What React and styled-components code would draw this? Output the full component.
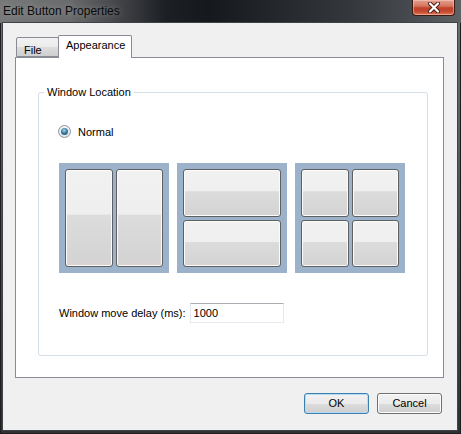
import styled, { createGlobalStyle } from "styled-components";

const GlobalStyle = createGlobalStyle`
  html, body {
    margin: 0;
    padding: 0;
    background: #ffffff;
  }
  body {
    font-family: "Liberation Sans", Arial, sans-serif;
    font-size: 11px;
    color: #000;
  }
`;

const layouts = ["cols", "rows", "grid"];

const App = () => {
  return (
    <>
      <GlobalStyle />
      <Window>
        <TitleBar>
          <Title>Edit Button Properties</Title>
          <CloseButton>
            <svg width="14" height="11" viewBox="0 0 14 11">
              <path d="M3 1.5 L11 9.5 M11 1.5 L3 9.5" stroke="#4a1a12" strokeWidth="4" strokeLinecap="round" />
              <path d="M3 1.5 L11 9.5 M11 1.5 L3 9.5" stroke="#ffffff" strokeWidth="2.2" strokeLinecap="round" />
            </svg>
          </CloseButton>
        </TitleBar>
        <Client>
          <TabStrip>
            <Tab width="43px">File</Tab>
            <Tab active width="74px">Appearance</Tab>
          </TabStrip>
          <Panel>
            <GroupBox>
              <GroupLabel>Window Location</GroupLabel>
              <RadioRow>
                <Radio>
                  <RadioDot />
                </Radio>
                <span>Normal</span>
              </RadioRow>
              <PreviewRow>
                {layouts.map((l) => (
                  <Preview key={l} layout={l}>
                    {Array.from({ length: l === "grid" ? 4 : 2 }).map((_, i) => (
                      <Pane key={i} />
                    ))}
                  </Preview>
                ))}
              </PreviewRow>
              <DelayRow>
                <span>Window move delay (ms):</span>
                <TextInput defaultValue="1000" />
              </DelayRow>
            </GroupBox>
          </Panel>
          <Footer>
            <Button primary>OK</Button>
            <Button>Cancel</Button>
          </Footer>
        </Client>
      </Window>
    </>
  );
};

const Window = styled.div`
  width: 461px;
  height: 434px;
  box-sizing: border-box;
  display: flex;
  flex-direction: column;
  padding: 0 4px 4px 3px;
  background: linear-gradient(to bottom, #6e7072 0%, #55585b 40%, #2e3134 100%);
  box-shadow: inset 0 0 0 1px #1d1f21;
`;

const TitleBar = styled.div`
  height: 23px;
  margin: 0 -4px 0 -3px;
  padding: 0 6px 0 3px;
  display: flex;
  justify-content: space-between;
  align-items: flex-start;
  background: linear-gradient(
    to right,
    #777878 0%,
    #6a6b6c 15%,
    #3a3c40 28%,
    #1c1f24 36%,
    #15181d 45%,
    #24272c 60%,
    #33363b 75%,
    #45484c 88%,
    #5f6265 100%
  );
`;

const Title = styled.div`
  align-self: center;
  margin-top: -2px;
  font-size: 12px;
  color: #0a0a0a;
  text-shadow: 0 0 6px rgba(255, 255, 255, 0.35);
`;

const CloseButton = styled.div`
  width: 43px;
  height: 16px;
  box-sizing: border-box;
  display: flex;
  align-items: center;
  justify-content: center;
  border: 1px solid #3c1a14;
  border-top: none;
  border-radius: 0 0 4px 4px;
  background: linear-gradient(
    to bottom,
    #e3a08f 0%,
    #d67761 40%,
    #c2432c 52%,
    #c4472f 75%,
    #de7a58 100%
  );
  box-shadow: inset 0 0 0 1px rgba(255, 220, 210, 0.45);
`;

const Client = styled.div`
  flex: 1;
  display: flex;
  flex-direction: column;
  padding: 13px 13px 0 12px;
  background: #f0f0f0;
  box-shadow: 0 0 0 1px #3f4246;
`;

const TabStrip = styled.div`
  display: flex;
  align-items: flex-end;
  height: 22px;
  padding-left: 1px;
  position: relative;
  z-index: 1;
  margin-bottom: -1px;
`;

const Tab = styled.div`
  box-sizing: border-box;
  width: ${({ width }) => width};
  height: ${({ active }) => (active ? "23px" : "20px")};
  padding: ${({ active }) => (active ? "3px 0 0 7px" : "6px 0 0 7px")};
  margin-left: ${({ active }) => (active ? "-1px" : "0")};
  border: 1px solid #898c95;
  border-bottom: ${({ active }) => (active ? "none" : "1px solid #898c95")};
  border-radius: 2px 2px 0 0;
  background: ${({ active }) =>
    active
      ? "#ffffff"
      : "linear-gradient(to bottom, #f2f2f2 0%, #ebebeb 50%, #dddddd 51%, #cfcfcf 100%)"};
  margin-bottom: ${({ active }) => (active ? "0" : "1px")};
`;

const Panel = styled.div`
  height: 321px;
  box-sizing: border-box;
  border: 1px solid #898c95;
  background: #ffffff;
  padding: 34px 16px 0 22px;
`;

const GroupBox = styled.div`
  position: relative;
  width: 390px;
  height: 264px;
  box-sizing: border-box;
  border: 1px solid #d5dfe5;
  border-radius: 3px;
  padding: 27px 0 0 20px;
`;

const GroupLabel = styled.span`
  position: absolute;
  top: -7px;
  left: 5px;
  padding: 0 3px;
  background: #ffffff;
  line-height: 13px;
`;

const RadioRow = styled.div`
  display: flex;
  align-items: center;
  gap: 7px;
  height: 13px;
  margin-left: -1px;
  margin-top: 5px;
`;

const Radio = styled.div`
  width: 13px;
  height: 13px;
  box-sizing: border-box;
  border-radius: 50%;
  border: 1px solid #8a97a6;
  background: radial-gradient(circle at 50% 40%, #ffffff 0%, #e4e7ea 70%, #c9ced3 100%);
  display: flex;
  align-items: center;
  justify-content: center;
`;

const RadioDot = styled.div`
  width: 7px;
  height: 7px;
  border-radius: 50%;
  background: radial-gradient(circle at 45% 35%, #a9dcf2 0%, #3f7ea6 45%, #1b3f5c 100%);
`;

const PreviewRow = styled.div`
  display: flex;
  gap: 8px;
  margin-top: 25px;
`;

const Preview = styled.div`
  width: 110px;
  height: 110px;
  box-sizing: border-box;
  padding: 6px;
  background: #9cb2ca;
  display: grid;
  gap: 3px;
  grid-template-columns: ${({ layout }) => (layout === "rows" ? "1fr" : "1fr 1fr")};
  grid-template-rows: ${({ layout }) => (layout === "cols" ? "1fr" : "1fr 1fr")};
`;

const Pane = styled.div`
  border: 1px solid #5e6061;
  border-radius: 3px;
  background: linear-gradient(
    to bottom,
    #f1f1f1 0%,
    #efefef 46%,
    #dcdcdc 47%,
    #d4d4d4 92%,
    #d8d2d2 100%
  );
  box-shadow: inset 0 0 0 1px #fbfbfb;
`;

const DelayRow = styled.div`
  display: flex;
  align-items: center;
  gap: 4px;
  margin-top: 30px;
`;

const TextInput = styled.input`
  width: 94px;
  height: 20px;
  box-sizing: border-box;
  border: 1px solid #e3e9ef;
  border-top-color: #abadb3;
  padding: 0 3px;
  font-family: "Liberation Sans", Arial, sans-serif;
  font-size: 11px;
  color: #000;
  background: #fff;
  outline: none;
`;

const Footer = styled.div`
  flex: 1;
  display: flex;
  justify-content: flex-end;
  align-items: center;
  gap: 8px;
  padding-right: 2px;
  padding-bottom: 2px;
`;

const Button = styled.div`
  width: 65px;
  height: 21px;
  box-sizing: border-box;
  display: flex;
  align-items: center;
  justify-content: center;
  border: 1px solid ${({ primary }) => (primary ? "#3c7fb1" : "#707070")};
  border-radius: 3px;
  background: linear-gradient(to bottom, #f2f2f2 0%, #ebebeb 50%, #dddddd 51%, #cfcfcf 100%);
  box-shadow: inset 0 0 0 1px ${({ primary }) => (primary ? "#b6dcf2" : "#fcfcfc")};
`;

export default App;
